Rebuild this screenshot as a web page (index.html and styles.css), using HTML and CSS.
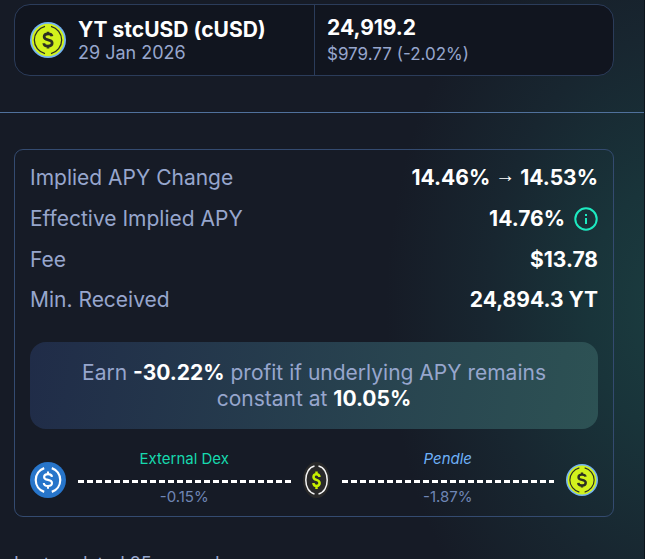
FILE: index.html
```html
<!DOCTYPE html>
<html lang="en">
<head>
<meta charset="utf-8">
<meta name="viewport" content="width=device-width, initial-scale=1">
<title>Swap summary</title>
<link rel="stylesheet" href="styles.css">
</head>
<body>
<svg class="defs" aria-hidden="true">
  <symbol id="coin-yt" viewBox="0 0 36 36">
    <circle cx="18" cy="18" r="18" fill="#75b4f2"/>
    <circle cx="18" cy="18" r="16.2" fill="#d2f21d"/>
    <path d="M15 4.4A14 14 0 0 0 15 31.6M21 4.4A14 14 0 0 1 21 31.6" fill="none" stroke="#2b2f22" stroke-width="1.3"/>
    <path d="M22 14.2C21.7 12.5 20.2 11.9 18 11.9C15.7 11.9 14.1 12.9 14.1 14.8C14.1 16.8 15.8 17.4 18 17.8C20.3 18.2 22.2 18.9 22.2 21.1C22.2 23.2 20.4 24.2 18 24.2C15.5 24.2 13.9 23.1 13.8 21.2M18 9.7V12M18 24V26.5" fill="none" stroke="#2b2f22" stroke-width="2.7"/>
  </symbol>
</svg>
<main class="page">
  <section class="token">
    <div class="token-asset">
      <svg class="coin" role="img" aria-label="YT stcUSD"><use href="#coin-yt"/></svg>
      <div>
        <h2 class="token-title">YT stcUSD (cUSD)</h2>
        <p class="token-date">29 Jan 2026</p>
      </div>
    </div>
    <div class="token-amount">
      <p class="token-title">24,919.2</p>
      <p class="token-value">$979.77 (-2.02%)</p>
    </div>
  </section>
  <hr class="rule">
  <section class="details">
    <dl class="stats">
      <div class="stat"><dt>Implied APY Change</dt><dd>14.46% <span class="arrow">→</span> 14.53%</dd></div>
      <div class="stat"><dt>Effective Implied APY</dt><dd>14.76%
        <button class="info" type="button" aria-label="About effective implied APY"><svg viewBox="0 0 24 24"><circle cx="12" cy="12" r="10.7"/><path d="M12 11V17"/><path d="M12 7V9"/></svg></button></dd></div>
      <div class="stat"><dt>Fee</dt><dd>$13.78</dd></div>
      <div class="stat"><dt>Min. Received</dt><dd>24,894.3 YT</dd></div>
    </dl>
    <p class="profit">Earn <strong>-30.22%</strong> profit if underlying APY remains constant at <strong>10.05%</strong></p>
    <div class="route">
      <svg class="coin" viewBox="0 0 36 36" role="img" aria-label="USDC">
        <circle cx="18" cy="18" r="18" fill="#2775ca"/>
        <path d="M14.2 6.1A12.6 12.6 0 0 0 14.2 29.9M21.8 6.1A12.6 12.6 0 0 1 21.8 29.9" fill="none" stroke="#fff" stroke-width="2.2"/>
        <path d="M22 14.8C21.8 12.9 20.3 12.1 18 12.1C15.7 12.1 14.1 13 14.1 14.9C14.1 16.8 15.7 17.4 18 17.9C20.4 18.4 22 19.1 22 21.1C22 23 20.4 24 18 24C15.5 24 13.9 22.9 13.8 21M18 9.5V12.2M18 24V26.8" fill="none" stroke="#fff" stroke-width="2.1"/>
      </svg>
      <div class="hop"><span class="venue">External Dex</span><span class="line"></span><span class="impact">-0.15%</span></div>
      <svg class="coin coin-narrow" viewBox="0 0 27 36" role="img" aria-label="cUSD">
        <ellipse cx="13.5" cy="18" rx="13.5" ry="18" fill="#292929"/>
        <path d="M11.5 4.1C6 5.3 2.8 11 2.8 18S6 30.7 11.5 31.9M15.5 4.1C21 5.3 24.2 11 24.2 18S21 30.7 15.5 31.9" fill="none" stroke="#f4f4f4" stroke-width="1.5"/>
        <path d="M16.5 15C16.3 13 15.3 12.3 13.5 12.3C11.7 12.3 10.5 13.3 10.5 15C10.5 17 11.8 17.4 13.5 17.9C15.3 18.4 16.6 19.1 16.6 21.1C16.6 23 15.3 24 13.5 24C11.6 24 10.5 23 10.4 21M13.5 9.5V12.5M13.5 24V27" fill="none" stroke="#c7f000" stroke-width="2.5"/>
      </svg>
      <div class="hop"><span class="venue venue-pendle">Pendle</span><span class="line"></span><span class="impact">-1.87%</span></div>
      <svg class="coin coin-small" role="img" aria-label="YT stcUSD"><use href="#coin-yt"/></svg>
    </div>
  </section>
  <p class="updated">Last updated 25 seconds ago</p>
</main>
</body>
</html>
```
FILE: styles.css
```css
* { box-sizing: border-box; }
html { height: 100%; overflow: hidden; background: #161b26; }
body {
  height: 100%;
  margin: 0;
  overflow: hidden;
  border-right: 1px solid #0d151d;
  font-family: Inter, "Liberation Sans", sans-serif;
  font-size: 21px;
  line-height: 26px;
  color: #97a6cd;
  background: radial-gradient(ellipse 290px 420px at 105% 55%, #1b3d40 0%, #19343a 30%, #182630 65%, #161b26 100%) #161b26;
}
h2, p, dl, dd { margin: 0; }
.defs { position: absolute; width: 0; height: 0; }
.page { padding-top: 4px; }
.token, .details, .updated { margin-left: 14px; margin-right: 30px; }
.token {
  display: grid;
  grid-template-columns: 1fr 1fr;
  height: 72px;
  border: 1px solid #2b3c5a;
  border-radius: 16px;
  background: #11151f;
}
.token-asset { display: flex; align-items: center; gap: 12px; padding-left: 15px; }
.token-amount {
  display: flex;
  flex-direction: column;
  justify-content: center;
  padding-left: 12px;
  padding-top: 2px;
  border-left: 1px solid #2b3c5a;
}
.token-title { font-size: 21px; line-height: 26px; font-weight: 700; color: #fff; }
.token-date { font-size: 18px; line-height: 20px; }
.token-value { font-size: 17px; line-height: 26px; }
.coin { display: block; flex: none; width: 36px; height: 36px; }
.coin-narrow { width: 27px; }
.coin-small { width: 32px; height: 32px; }
.rule { height: 1px; margin: 36px 0; border: 0; background: #50719c; }
.details { padding: 15px 15px 5px; border: 1px solid #344b70; border-radius: 9px; }
.stats { display: grid; gap: 14px; }
.stat { display: flex; justify-content: space-between; align-items: center; }
.stat dd { display: flex; align-items: center; gap: 5px; font-weight: 700; color: #fff; }
.arrow { align-self: flex-start; font-family: "Liberation Sans", sans-serif; font-size: 20px; line-height: 20px; font-weight: 400; }
.info { width: 24px; height: 28px; margin-left: 4px; padding: 2px 0; border: 0; background: none; color: #1de9c0; cursor: pointer; }
.info svg { display: block; width: 24px; height: 24px; fill: none; stroke: currentColor; stroke-width: 2; }
.profit {
  margin-top: 29px;
  padding: 18px 40px 17px;
  border-radius: 16px;
  text-align: center;
  background: linear-gradient(100deg, #202c48, #2d5254);
}
.profit strong { font-weight: 700; color: #fff; }
.route { display: flex; align-items: center; gap: 12px; margin-top: 20px; }
.hop { flex: 1; display: flex; flex-direction: column; align-items: center; padding-bottom: 4px; font-size: 15px; line-height: 20px; }
.line {
  align-self: stretch;
  height: 3px;
  margin: 11px 0 4px;
  background: repeating-linear-gradient(90deg, #fff 0 6px, transparent 6px 9px);
}
.venue { color: #16d9ae; }
.venue-pendle { color: #6eb0f8; font-style: italic; }
.impact { color: #6f86b5; }
.updated { margin-top: 34px; font-size: 18px; }
```
